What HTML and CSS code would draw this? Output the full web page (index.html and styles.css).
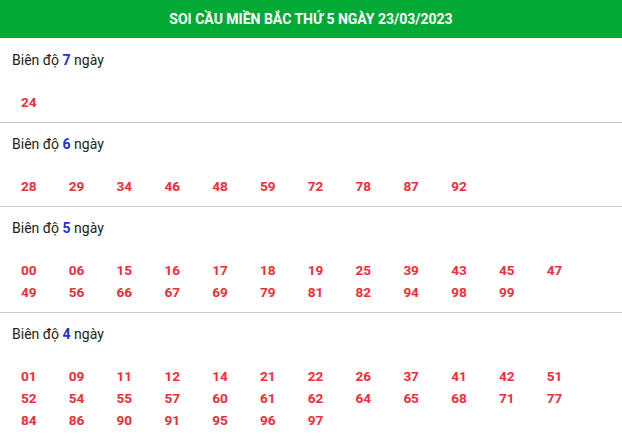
FILE: index.html
```html
<!DOCTYPE html>
<html lang="vi">
<head>
    <meta charset="UTF-8">
    <meta name="viewport" content="width=device-width, initial-scale=1.0">
    <title>Soi cầu miền Bắc</title>
    <link rel="stylesheet" href="styles.css">
</head>
<body>
    <div class="box">
        <h2 class="box-title">SOI CẦU MIỀN BẮC THỨ 5 NGÀY 23/03/2023</h2>

        <!-- biên độ 7 ngày -->
        <div class="range">
            <div class="range-label">Biên độ <b>7</b> ngày</div>
            <div class="nums">
                <span>24</span>
            </div>
        </div>

        <!-- biên độ 6 ngày -->
        <div class="range">
            <div class="range-label">Biên độ <b>6</b> ngày</div>
            <div class="nums">
                <span>28</span><span>29</span><span>34</span><span>46</span><span>48</span><span>59</span>
                <span>72</span><span>78</span><span>87</span><span>92</span>
            </div>
        </div>

        <!-- biên độ 5 ngày -->
        <div class="range">
            <div class="range-label">Biên độ <b>5</b> ngày</div>
            <div class="nums">
                <span>00</span><span>06</span><span>15</span><span>16</span><span>17</span><span>18</span>
                <span>19</span><span>25</span><span>39</span><span>43</span><span>45</span><span>47</span>
                <span>49</span><span>56</span><span>66</span><span>67</span><span>69</span><span>79</span>
                <span>81</span><span>82</span><span>94</span><span>98</span><span>99</span>
            </div>
        </div>

        <!-- biên độ 4 ngày -->
        <div class="range">
            <div class="range-label">Biên độ <b>4</b> ngày</div>
            <div class="nums">
                <span>01</span><span>09</span><span>11</span><span>12</span><span>14</span><span>21</span>
                <span>22</span><span>26</span><span>37</span><span>41</span><span>42</span><span>51</span>
                <span>52</span><span>54</span><span>55</span><span>57</span><span>60</span><span>61</span>
                <span>62</span><span>64</span><span>65</span><span>68</span><span>71</span><span>77</span>
                <span>84</span><span>86</span><span>90</span><span>91</span><span>95</span><span>96</span>
                <span>97</span>
            </div>
        </div>
    </div>
</body>
</html>
```

FILE: styles.css
```css
* {
    margin: 0;
    padding: 0;
    box-sizing: border-box;
}

body {
    font-family: Roboto, "Noto Sans", Arial, sans-serif;
    background-color: #fff;
    color: #222;
}

.box {
    width: 622px;
}

.box-title {
    height: 38px;
    line-height: 38px;
    background-color: #03aa36;
    color: #fff;
    font-size: 14px;
    font-weight: bold;
    text-align: center;
}

.range {
    padding: 11px 0 9px 12px;
    border-bottom: 1px solid #c9c9c9;
}

.range:first-of-type {
    padding-top: 12px;
}

.range:last-child {
    border-bottom: none;
}

.range-label {
    font-size: 14px;
    line-height: 20px;
    color: #222;
}

.range-label b {
    color: #1634d6;
}

.nums {
    display: grid;
    grid-template-columns: repeat(12, 47.8px);
    margin-top: 21px;
    padding-left: 9px;
}

.nums span {
    font-size: 13.5px;
    line-height: 22px;
    font-weight: bold;
    color: #f72a38;
}
```
